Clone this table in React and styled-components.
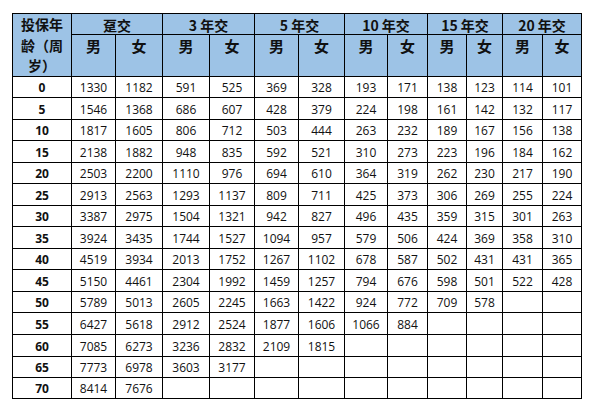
import React from "react";
import styled, { createGlobalStyle } from "styled-components";

const Global = createGlobalStyle`
  html, body { margin: 0; padding: 0; background: #fff; }
`;

const COLS = [59, 44, 47, 47, 45, 44, 46, 43, 40, 39, 36, 40, 39];
const DATA_ROWS = [21, 22, 21, 22, 21, 22, 21, 22, 21, 22, 21, 22, 22, 21, 21];

const Table = styled.div`
  display: grid;
  grid-template-columns: ${COLS.map((c) => c + "px").join(" ")};
  grid-template-rows: 21px 42px ${DATA_ROWS.map((r) => r + "px").join(" ")};
  width: max-content;
  margin: 13px 0 0 12px;
  border-top: 1px solid #000;
  border-left: 1px solid #000;
  color: #111;
`;

const Cell = styled.div`
  box-sizing: border-box;
  border-right: 1px solid #000;
  border-bottom: 1px solid #000;
  display: flex;
  justify-content: center;
  align-items: center;
  text-align: center;
  overflow: hidden;
  white-space: nowrap;
`;

const AgeHead = styled(Cell)`
  grid-row: span 2;
  background: #9dc3e6;
  font-family: "Noto Sans CJK SC", sans-serif;
  font-weight: 700;
  font-size: 14px;
  line-height: 20.5px;
  white-space: normal;
  padding: 0 4px;
  align-items: flex-start;
  word-break: break-all;
`;

const GroupHead = styled(Cell)`
  grid-column: span 2;
  background: #9dc3e6;
  font-family: "Noto Sans CJK SC", sans-serif;
  font-weight: 700;
  font-size: 14px;
  line-height: 20px;
  padding-top: 1px;
`;

const SexHead = styled(Cell)`
  background: #9dc3e6;
  font-family: "Noto Sans CJK SC", sans-serif;
  font-weight: 700;
  font-size: 15px;
  line-height: 20px;
  align-items: flex-start;
  padding-top: 1px;
`;

const Num = styled(Cell)`
  font-family: "Open Sans", "Liberation Sans", sans-serif;
  font-size: 12px;
  font-weight: ${(p) => (p.$bold ? 700 : 400)};
  padding-top: 1px;
`;

const groups = ["趸交", "3 年交", "5 年交", "10 年交", "15 年交", "20 年交"];

const rows = [
  [0, 1330, 1182, 591, 525, 369, 328, 193, 171, 138, 123, 114, 101],
  [5, 1546, 1368, 686, 607, 428, 379, 224, 198, 161, 142, 132, 117],
  [10, 1817, 1605, 806, 712, 503, 444, 263, 232, 189, 167, 156, 138],
  [15, 2138, 1882, 948, 835, 592, 521, 310, 273, 223, 196, 184, 162],
  [20, 2503, 2200, 1110, 976, 694, 610, 364, 319, 262, 230, 217, 190],
  [25, 2913, 2563, 1293, 1137, 809, 711, 425, 373, 306, 269, 255, 224],
  [30, 3387, 2975, 1504, 1321, 942, 827, 496, 435, 359, 315, 301, 263],
  [35, 3924, 3435, 1744, 1527, 1094, 957, 579, 506, 424, 369, 358, 310],
  [40, 4519, 3934, 2013, 1752, 1267, 1102, 678, 587, 502, 431, 431, 365],
  [45, 5150, 4461, 2304, 1992, 1459, 1257, 794, 676, 598, 501, 522, 428],
  [50, 5789, 5013, 2605, 2245, 1663, 1422, 924, 772, 709, 578],
  [55, 6427, 5618, 2912, 2524, 1877, 1606, 1066, 884],
  [60, 7085, 6273, 3236, 2832, 2109, 1815],
  [65, 7773, 6978, 3603, 3177],
  [70, 8414, 7676],
];

export default function App() {
  return (
    <>
      <Global />
      <Table>
        <AgeHead>投保年龄（周岁）</AgeHead>
        {groups.map((g) => (
          <GroupHead key={g}>{g}</GroupHead>
        ))}
        {groups.map((g) => (
          <React.Fragment key={g + "s"}>
            <SexHead>男</SexHead>
            <SexHead>女</SexHead>
          </React.Fragment>
        ))}
        {rows.map((r) =>
          Array.from({ length: 13 }, (_, i) => (
            <Num key={r[0] + "-" + i} $bold={i === 0}>
              {r[i] !== undefined ? r[i] : ""}
            </Num>
          ))
        )}
      </Table>
    </>
  );
}
